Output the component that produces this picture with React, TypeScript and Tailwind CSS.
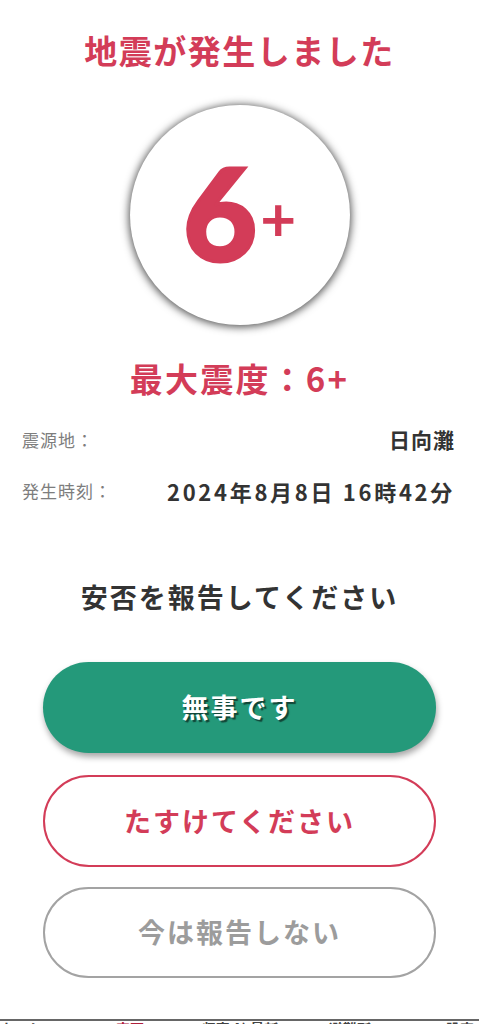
import React from "react";

export default function App() {
  const jp = "font-['Noto_Sans_CJK_JP','Noto_Sans',sans-serif]";
  return (
    <div className={`h-[1024px] w-full overflow-hidden bg-white flex flex-col ${jp}`}>
      <h1 className="pt-[30px] text-center text-[33px] font-bold leading-[40px] tracking-[1.5px] text-[#d33c58]">
        地震が発生しました
      </h1>

      <div className="mt-[35px] mx-auto w-[220px] h-[220px] rounded-full bg-white shadow-[0_1px_8px_1px_rgba(0,0,0,0.7)] flex items-center justify-center">
        <div className="flex items-baseline pb-[6px] font-['Lato',sans-serif] text-[#d33c58]">
          <span className="text-[128px] font-black leading-none [-webkit-text-stroke:3px_#d33c58]">6</span>
          <span className="text-[62px] font-bold leading-none ml-[3px] relative -top-[20px]">+</span>
        </div>
      </div>

      <h2 className="mt-[33px] text-center text-[33px] font-bold leading-[40px] tracking-[2.2px] text-[#d33c58]">
        最大震度：6+
      </h2>

      <div className="mt-[25px] pl-[22px] pr-[24px] flex flex-col gap-[17px]">
        <div className="h-[34px] flex items-center justify-between">
          <span className="text-[17px] text-[#7d7d7d] tracking-[1px]">震源地：</span>
          <span className="text-[21px] font-bold text-[#333] tracking-[1px]">日向灘</span>
        </div>
        <div className="h-[34px] flex items-center justify-between">
          <span className="text-[17px] text-[#7d7d7d] tracking-[1px]">発生時刻：</span>
          <span className="text-[22px] font-bold text-[#333] tracking-[2.7px]">2024年8月8日 16時42分</span>
        </div>
      </div>

      <p className="mt-[71px] text-center text-[27px] font-bold leading-[36px] tracking-[2px] text-[#333]">
        安否を報告してください
      </p>

      <div className="mt-[47px] flex flex-col items-center">
        <button className="w-[393px] h-[91px] rounded-full bg-[#24997a] shadow-[1px_4px_6px_rgba(0,0,0,0.35)] text-white text-[27px] font-bold tracking-[2px] [text-shadow:2px_2px_1px_rgba(0,0,0,0.55)]">
          無事です
        </button>
        <button className="mt-[22px] w-[393px] h-[92px] rounded-full bg-white border-[2.5px] border-[#d33c58] text-[#d33c58] text-[27px] font-bold tracking-[2px]">
          たすけてください
        </button>
        <button className="mt-[20px] w-[393px] h-[91px] rounded-full bg-white border-[2.5px] border-[#a3a3a3] text-[#9c9c9c] text-[27px] font-bold tracking-[2px]">
          今は報告しない
        </button>
      </div>

      <div className="mt-auto h-[5px] border-t-[2px] border-[#666] bg-white overflow-hidden">
        <div className="ml-[-35px] w-[550px] grid grid-cols-5 text-[14px] leading-[14px] font-bold text-[#444]">
          <span className="text-center">ホーム</span>
          <span className="text-center text-[#b0203c]">安否</span>
          <span className="text-center">収容 A) 最新</span>
          <span className="text-center">避難所</span>
          <span className="text-center">設定</span>
        </div>
      </div>
    </div>
  );
}
